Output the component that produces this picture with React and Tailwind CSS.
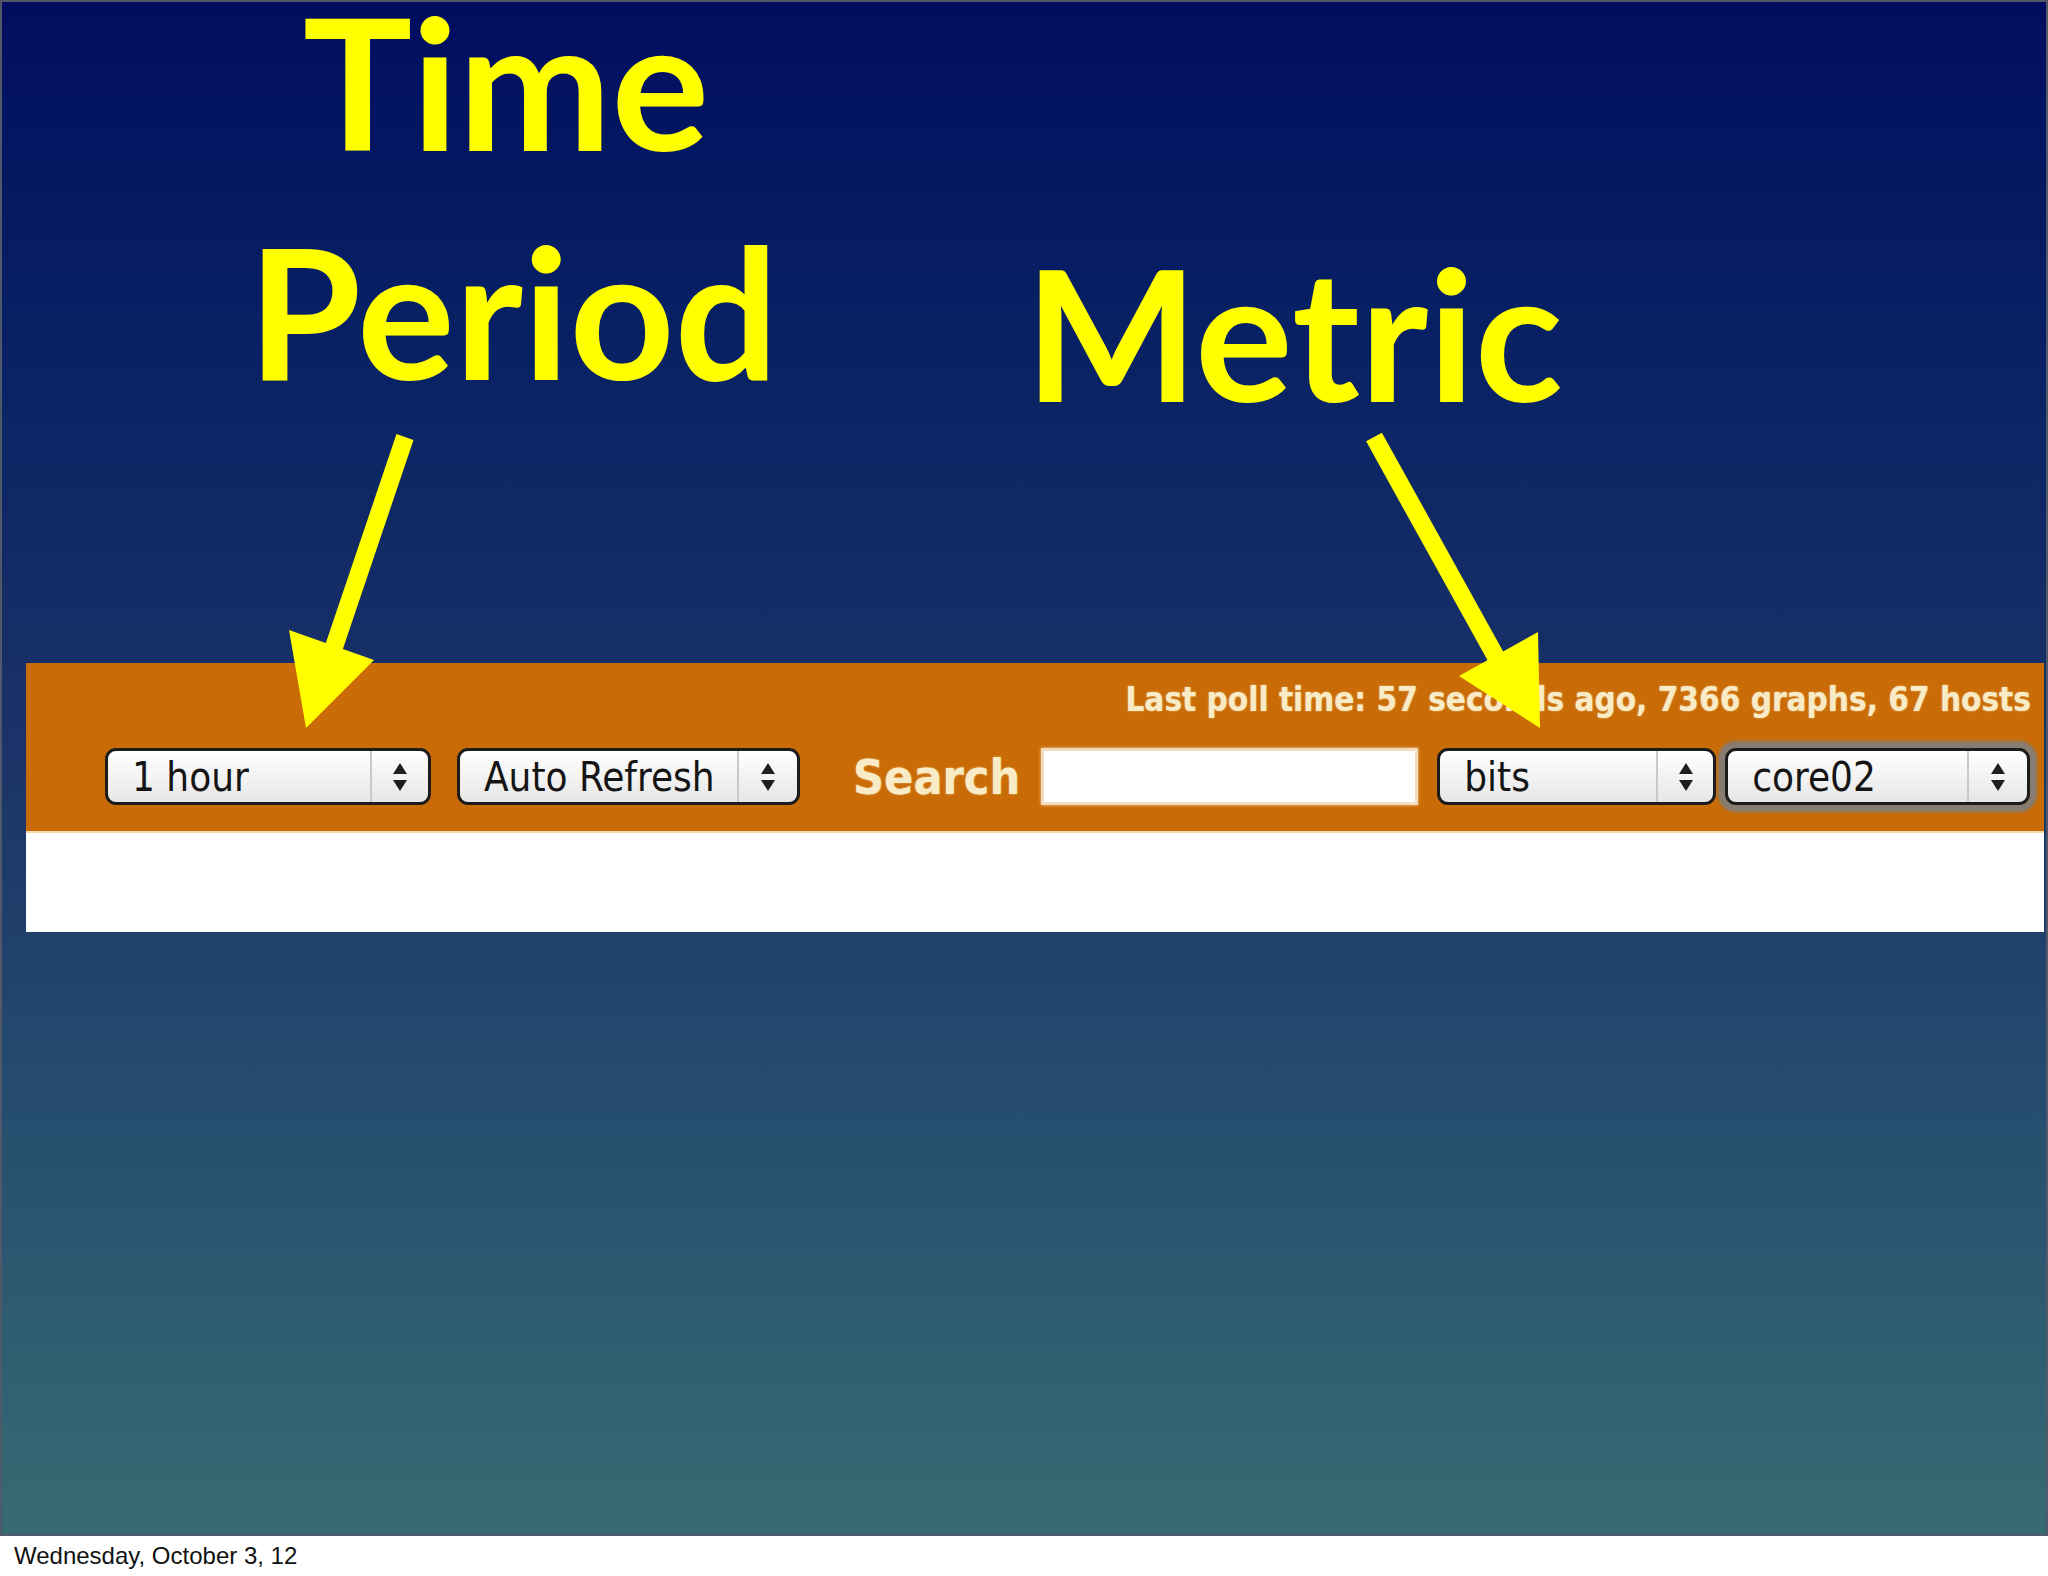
import React from 'react';

const UI_FONT = '[font-family:"DejaVu_Sans_Condensed","DejaVu_Sans",sans-serif] [font-stretch:condensed]';

function Stepper() {
  return (
    <svg width="16" height="30" viewBox="0 0 16 30" className="block">
      <polygon points="8,1 15,12 1,12" fill="#1e1e1e" />
      <polygon points="1,18 15,18 8,29" fill="#1e1e1e" />
    </svg>
  );
}

function Select({ label, width, arrowWidth, focused }) {
  return (
    <div
      className={`flex h-[57px] shrink-0 items-stretch overflow-hidden rounded-[11px] border-[3px] border-[#1c1c1c] bg-gradient-to-b from-[#ffffff] via-[#f3f3f3] to-[#e6e6e6] ${
        focused ? 'shadow-[0_0_3px_7px_rgba(125,128,128,0.9)]' : ''
      }`}
      style={{ width }}
    >
      <div className={`flex flex-1 items-center pl-[24px] text-[40px] leading-none text-[#151515] ${UI_FONT}`}>
        {label}
      </div>
      <div className="w-[2px] bg-[#c9c9c9]" />
      <div className="flex items-center justify-center" style={{ width: arrowWidth }}>
        <Stepper />
      </div>
    </div>
  );
}

export default function App() {
  return (
    <div className="flex h-[1576px] w-[2048px] flex-col overflow-hidden bg-white">
      {/* Slide */}
      <div className="relative h-[1536px] w-full overflow-hidden bg-gradient-to-b from-[#020c60] via-[#1b3468] to-[#376b73] shadow-[inset_0_0_0_2px_#50586a]">
        {/* Headings */}
        <div className="flex h-[663px] items-start text-[183px] font-bold leading-[229px] text-[#ffff00] [font-family:Lato,sans-serif]">
          <div className="-mt-[34px] ml-[248px] w-[516px] shrink-0 text-center">
            <div>Time</div>
            <div>Period</div>
          </div>
          <div className="ml-[261px] mt-[217px] w-[532px] shrink-0 text-center">Metric</div>
        </div>

        {/* Screenshot panel */}
        <div className="ml-[26px] w-[2018px]">
          <div className="h-[168px] bg-[#c96b06] pt-[17px]">
            <div
              className={`pr-[13px] text-right text-[33px] font-bold leading-[40px] text-[#f8ebc6] [text-shadow:0_0_2px_rgba(255,236,190,0.7)] ${UI_FONT}`}
            >
              Last poll time: 57 seconds ago, 7366 graphs, 67 hosts
            </div>
            <div className="mt-[28px] flex items-center pl-[79px]">
              <Select label="1 hour" width={326} arrowWidth={56} />
              <div className="ml-[26px]">
                <Select label="Auto Refresh" width={343} arrowWidth={58} />
              </div>
              <div
                className={`ml-[53px] text-[48px] font-bold leading-none text-[#f8ebc6] [text-shadow:0_0_2px_rgba(255,236,190,0.7)] ${UI_FONT}`}
              >
                Search
              </div>
              <div className="ml-[21px] h-[57px] w-[377px] shrink-0 border-[3px] border-[#f2dcc0] bg-white shadow-[0_0_3px_rgba(255,230,200,0.8)]" />
              <div className="ml-[19px]">
                <Select label="bits" width={279} arrowWidth={55} />
              </div>
              <div className="ml-[9px]">
                <Select label="core02" width={305} arrowWidth={58} focused />
              </div>
            </div>
          </div>
          <div className="h-[2px] bg-[#f6d9a6]" />
          <div className="h-[99px] bg-white" />
        </div>

        {/* Arrows */}
        <svg className="pointer-events-none absolute left-0 top-0" width="2048" height="1536" viewBox="0 0 2048 1536">
          <line x1="405" y1="437" x2="333" y2="650" stroke="#ffff00" strokeWidth="18" />
          <polygon points="306,728 374,660 289,630" fill="#ffff00" />
          <line x1="1374" y1="437" x2="1496" y2="657" stroke="#ffff00" strokeWidth="18" />
          <polygon points="1540,728 1538,632 1459,676" fill="#ffff00" />
        </svg>
      </div>

      {/* Footer */}
      <div className="h-[40px] pl-[14px] text-[24px] leading-[40px] text-[#111] [font-family:'Liberation_Sans',Arial,sans-serif]">
        Wednesday, October 3, 12
      </div>
    </div>
  );
}
